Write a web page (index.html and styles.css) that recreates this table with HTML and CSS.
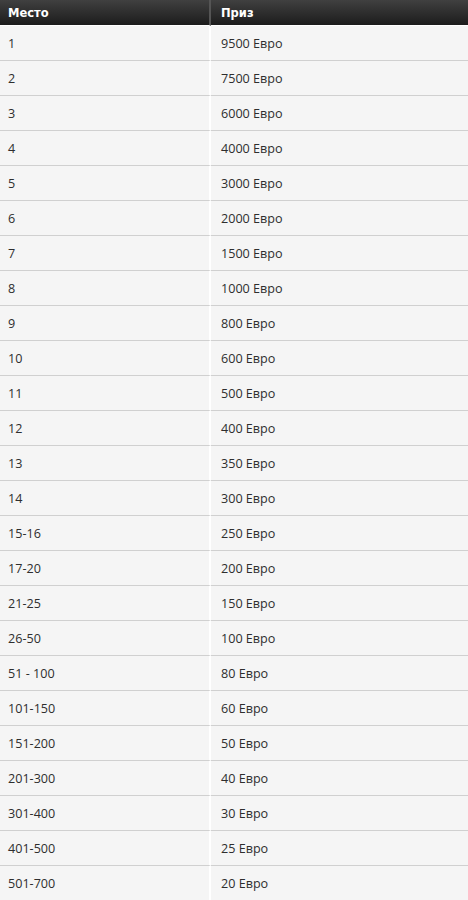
FILE: index.html
```html
<!DOCTYPE html>
<html lang="ru">
<head>
<meta charset="utf-8">
<title>Призы</title>
<link rel="stylesheet" href="styles.css">
</head>
<body>
<table class="prizes">
  <thead>
    <tr><th class="col-place">Место</th><th class="col-prize">Приз</th></tr>
  </thead>
  <tbody>
    <tr><td>1</td><td>9500 Евро</td></tr>
    <tr><td>2</td><td>7500 Евро</td></tr>
    <tr><td>3</td><td>6000 Евро</td></tr>
    <tr><td>4</td><td>4000 Евро</td></tr>
    <tr><td>5</td><td>3000 Евро</td></tr>
    <tr><td>6</td><td>2000 Евро</td></tr>
    <tr><td>7</td><td>1500 Евро</td></tr>
    <tr><td>8</td><td>1000 Евро</td></tr>
    <tr><td>9</td><td>800 Евро</td></tr>
    <tr><td>10</td><td>600 Евро</td></tr>
    <tr><td>11</td><td>500 Евро</td></tr>
    <tr><td>12</td><td>400 Евро</td></tr>
    <tr><td>13</td><td>350 Евро</td></tr>
    <tr><td>14</td><td>300 Евро</td></tr>
    <tr><td>15-16</td><td>250 Евро</td></tr>
    <tr><td>17-20</td><td>200 Евро</td></tr>
    <tr><td>21-25</td><td>150 Евро</td></tr>
    <tr><td>26-50</td><td>100 Евро</td></tr>
    <tr><td>51 - 100</td><td>80 Евро</td></tr>
    <tr><td>101-150</td><td>60 Евро</td></tr>
    <tr><td>151-200</td><td>50 Евро</td></tr>
    <tr><td>201-300</td><td>40 Евро</td></tr>
    <tr><td>301-400</td><td>30 Евро</td></tr>
    <tr><td>401-500</td><td>25 Евро</td></tr>
    <tr><td>501-700</td><td>20 Евро</td></tr>
  </tbody>
</table>
</body>
</html>
```
FILE: styles.css
```css
html, body {
  margin: 0;
  padding: 0;
  background: #ffffff;
}
.prizes {
  width: 468px;
  border-collapse: separate;
  border-spacing: 0;
  table-layout: fixed;
  font-family: "Open Sans", "Noto Sans", sans-serif;
  font-size: 12.6px;
  color: #2e2e2e;
}
.prizes th {
  height: 25px;
  padding: 0 8px;
  text-align: left;
  font-family: "DejaVu Sans", sans-serif;
  font-size: 11.5px;
  font-weight: bold;
  color: #ffffff;
  background: linear-gradient(#404040, #1c1c1c);
  border-bottom: 1px solid #ffffff;
  vertical-align: middle;
}
.prizes .col-place {
  width: 193px;
  border-right: 2px solid #555555;
}
.prizes .col-prize {
  padding-left: 10px;
}
.prizes td {
  height: 33px;
  padding: 1px 8px 0;
  background: #f5f5f5;
  border-bottom: 1px solid #d0d0d0;
  vertical-align: middle;
}
.prizes td:first-child {
  border-right: 2px solid #ffffff;
}
.prizes td + td {
  padding-left: 10px;
}
```
